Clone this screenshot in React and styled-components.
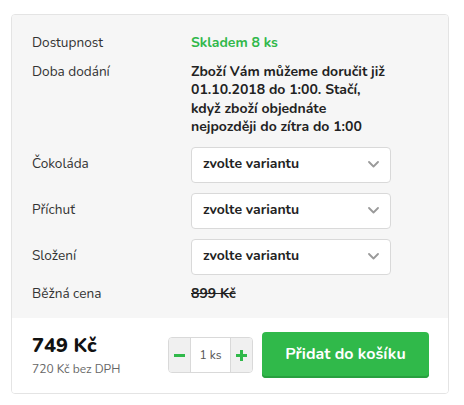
import React from "react";
import styled, { createGlobalStyle } from "styled-components";

const Global = createGlobalStyle`
  html, body { margin: 0; padding: 0; background: #fff; }
  body { font-family: "Nunito", "Open Sans", sans-serif; color: #222; }
  * { box-sizing: border-box; }
`;

const Page = styled.div`
  padding: 14px 15px 0 11px;
`;

const Card = styled.div`
  width: 438px;
  border: 1px solid #e4e4e4;
  border-radius: 4px;
  overflow: hidden;
`;

const Top = styled.div`
  background: #f6f6f6;
  padding: 19px 20px 15px 20px;
  display: flex;
  flex-direction: column;
  gap: 10px;
`;

const Row = styled.div`
  display: grid;
  grid-template-columns: 159px 200px;
  align-items: ${(p) => (p.$center ? "center" : "start")};
  font-size: 14px;
  line-height: 18.5px;
`;

const Label = styled.div`
  color: #333;
  font-size: 13.6px;
`;

const Value = styled.div`
  font-weight: 700;
  color: ${(p) => (p.$green ? "#30b84a" : "#222")};
  text-decoration: ${(p) => (p.$strike ? "line-through" : "none")};
`;

const Select = styled.div`
  height: 36px;
  width: 200px;
  background: #fff;
  border: 1px solid #d9d9d9;
  border-radius: 4px;
  display: flex;
  align-items: center;
  justify-content: space-between;
  padding: 0 11px 0 11px;
  font-weight: 700;
  font-size: 14px;
  color: #222;
`;

const Bottom = styled.div`
  background: #fff;
  padding: 14px 19px 15px 20px;
  display: flex;
  align-items: center;
  justify-content: space-between;
`;

const PriceBox = styled.div`
  display: flex;
  flex-direction: column;
  gap: 3px;
`;

const Price = styled.div`
  font-size: 20px;
  font-weight: 800;
  line-height: 24px;
  color: #111;
`;

const NoVat = styled.div`
  font-size: 12px;
  color: #666;
  line-height: 16px;
`;

const Actions = styled.div`
  display: flex;
  align-items: center;
  gap: 9px;
`;

const Qty = styled.div`
  display: flex;
  height: 36px;
  border: 1px solid #d9d9d9;
  border-radius: 4px;
  overflow: hidden;
`;

const QtyBtn = styled.div`
  width: 21px;
  background: #f0f0f0;
  display: flex;
  align-items: center;
  justify-content: center;
`;

const QtyInput = styled.div`
  width: 41px;
  background: #fff;
  border-left: 1px solid #d9d9d9;
  border-right: 1px solid #d9d9d9;
  display: flex;
  align-items: center;
  justify-content: center;
  font-size: 12px;
  color: #555;
`;

const AddButton = styled.button`
  width: 167px;
  height: 46px;
  border: none;
  border-radius: 4px;
  background: #30b94a;
  box-shadow: inset 0 -2px 0 #28a03f;
  color: #fff;
  font-family: inherit;
  font-size: 16px;
  font-weight: 700;
  padding: 0 0 2px 0;
`;

const Chevron = () => (
  <svg width="11" height="7" viewBox="0 0 11 7">
    <path d="M1 1l4.5 4.5L10 1" fill="none" stroke="#9a9a9a" strokeWidth="1.8" strokeLinecap="round" strokeLinejoin="round" />
  </svg>
);

const Minus = () => (
  <svg width="11" height="11" viewBox="0 0 11 11">
    <rect x="0" y="4" width="11" height="3" fill="#30b94a" />
  </svg>
);

const Plus = () => (
  <svg width="11" height="11" viewBox="0 0 11 11">
    <rect x="0" y="4" width="11" height="3" fill="#30b94a" />
    <rect x="4" y="0" width="3" height="11" fill="#30b94a" />
  </svg>
);

const variants = ["Čokoláda", "Příchuť", "Složení"];

export default function App() {
  return (
    <>
      <Global />
      <Page>
        <Card>
          <Top>
            <Row>
              <Label>Dostupnost</Label>
              <Value $green>Skladem 8 ks</Value>
            </Row>
            <Row>
              <Label>Doba dodání</Label>
              <Value>Zboží Vám můžeme doručit již 01.10.2018 do 1:00. Stačí, když zboží objednáte nejpozději do zítra do 1:00</Value>
            </Row>
            {variants.map((v) => (
              <Row key={v} $center>
                <Label>{v}</Label>
                <Select>
                  <span>zvolte variantu</span>
                  <Chevron />
                </Select>
              </Row>
            ))}
            <Row>
              <Label>Běžná cena</Label>
              <Value $strike>899 Kč</Value>
            </Row>
          </Top>
          <Bottom>
            <PriceBox>
              <Price>749 Kč</Price>
              <NoVat>720 Kč bez DPH</NoVat>
            </PriceBox>
            <Actions>
              <Qty>
                <QtyBtn><Minus /></QtyBtn>
                <QtyInput>1 ks</QtyInput>
                <QtyBtn><Plus /></QtyBtn>
              </Qty>
              <AddButton>Přidat do košíku</AddButton>
            </Actions>
          </Bottom>
        </Card>
      </Page>
    </>
  );
}
